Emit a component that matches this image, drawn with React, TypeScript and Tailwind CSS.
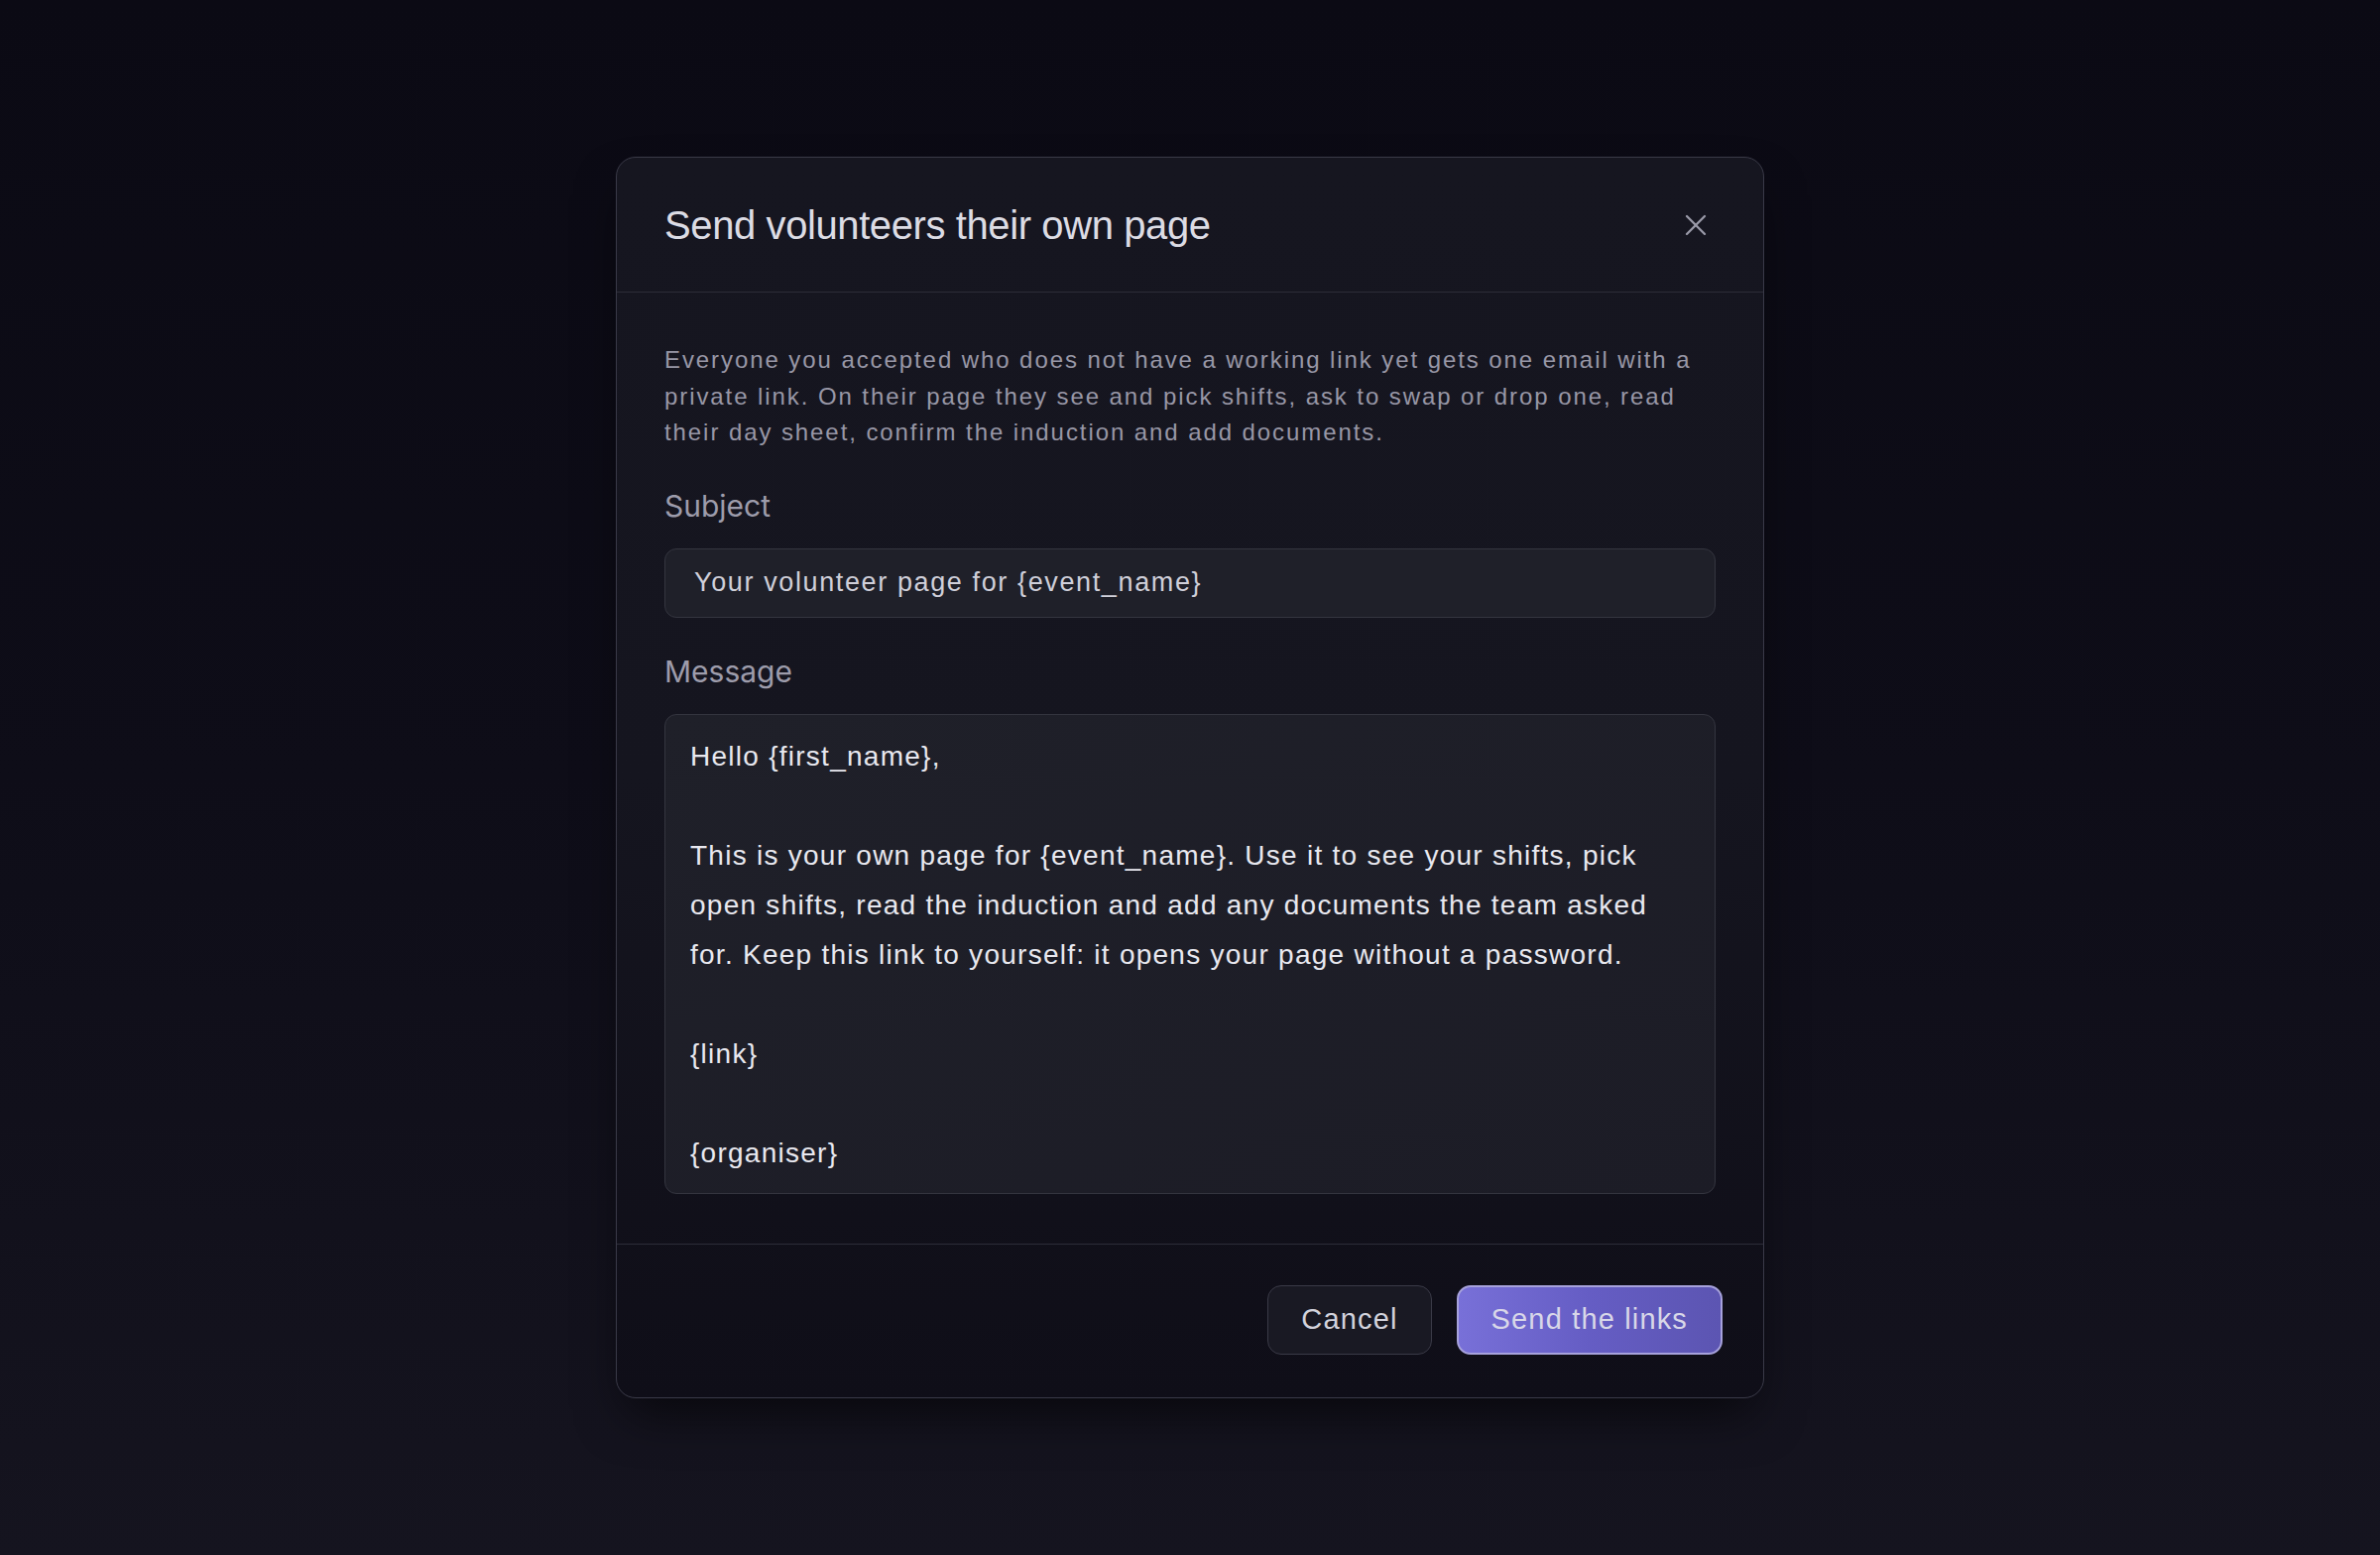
import { X } from "lucide-react";

const sans = "font-['Liberation_Sans',Arial,sans-serif]";
const inter = "font-['Inter','Noto_Sans',sans-serif]";

const message = `Hello {first_name},

This is your own page for {event_name}. Use it to see your shifts, pick open shifts, read the induction and add any documents the team asked for. Keep this link to yourself: it opens your page without a password.

{link}

{organiser}`;

function Field({ label, children }: { label: string; children: React.ReactNode }) {
  return (
    <div className="flex flex-col">
      <label className={`${inter} text-[30px] leading-[36px] text-[#9d9cab] mb-[25px]`}>{label}</label>
      {children}
    </div>
  );
}

export default function App() {
  return (
    <div className="min-h-screen w-full flex items-center justify-center bg-gradient-to-b from-[#0b0a14] via-[#0e0d18] to-[#15141f]">
      <div className="w-[1158px] rounded-[20px] border border-[#3a3a48] bg-gradient-to-b from-[#161620] via-[#15151f] to-[#0f0e18] shadow-2xl shadow-black/60 overflow-hidden">
        <div className="h-[136px] px-12 flex items-center justify-between border-b border-[#2c2c38]">
          <h2 className={`${sans} text-[40px] leading-none tracking-[-0.01em] text-[#dcdce4]`}>
            Send volunteers their own page
          </h2>
          <button className="w-9 h-9 mr-[2px] flex items-center justify-center text-[#9a9aa8]">
            <X size={38} strokeWidth={1.5} />
          </button>
        </div>

        <div className="px-12 pt-[50px] pb-[50px] flex flex-col">
          <p className={`${sans} text-[24px] leading-[36.5px] tracking-[0.08em] text-[#9897a6]`}>
            Everyone you accepted who does not have a working link yet gets one email with a private link. On their
            page they see and pick shifts, ask to swap or drop one, read their day sheet, confirm the induction and
            add documents.
          </p>

          <div className="mt-[37px]">
            <Field label="Subject">
              <input
                readOnly
                value="Your volunteer page for {event_name}"
                className={`${sans} h-[70px] w-full rounded-[12px] border border-[#34353f] bg-[#1f2029] px-[29px] text-[27px] tracking-[0.06em] text-[#cfcfd9] outline-none`}
              />
            </Field>
          </div>

          <div className="mt-[36px]">
            <Field label="Message">
              <textarea
                readOnly
                defaultValue={message}
                className={`${sans} h-[484px] w-full resize-none overflow-hidden rounded-[12px] border border-[#34353f] bg-gradient-to-br from-[#1f2029] to-[#1c1c26] pr-[16px] pl-[25px] pt-[17px] text-[28px] leading-[50px] tracking-[0.045em] text-[#e8e8ef] outline-none`}
              />
            </Field>
          </div>
        </div>

        <div className="border-t border-[#2c2c38] px-[41px] pt-[41px] pb-[43px] flex justify-end gap-[25px]">
          <button
            className={`${sans} h-[70px] px-[33px] rounded-[14px] border border-[#3a3a47] bg-[#191923] text-[29px] tracking-[0.04em] text-[#d2d2dc]`}
          >
            Cancel
          </button>
          <button
            className={`${sans} h-[70px] px-[33px] rounded-[14px] border-2 border-[#a7a2dc] bg-gradient-to-r from-[#7870d8] via-[#655dc4] to-[#5c55b2] text-[29px] tracking-[0.04em] text-[#d8d7e8]`}
          >
            Send the links
          </button>
        </div>
      </div>
    </div>
  );
}
